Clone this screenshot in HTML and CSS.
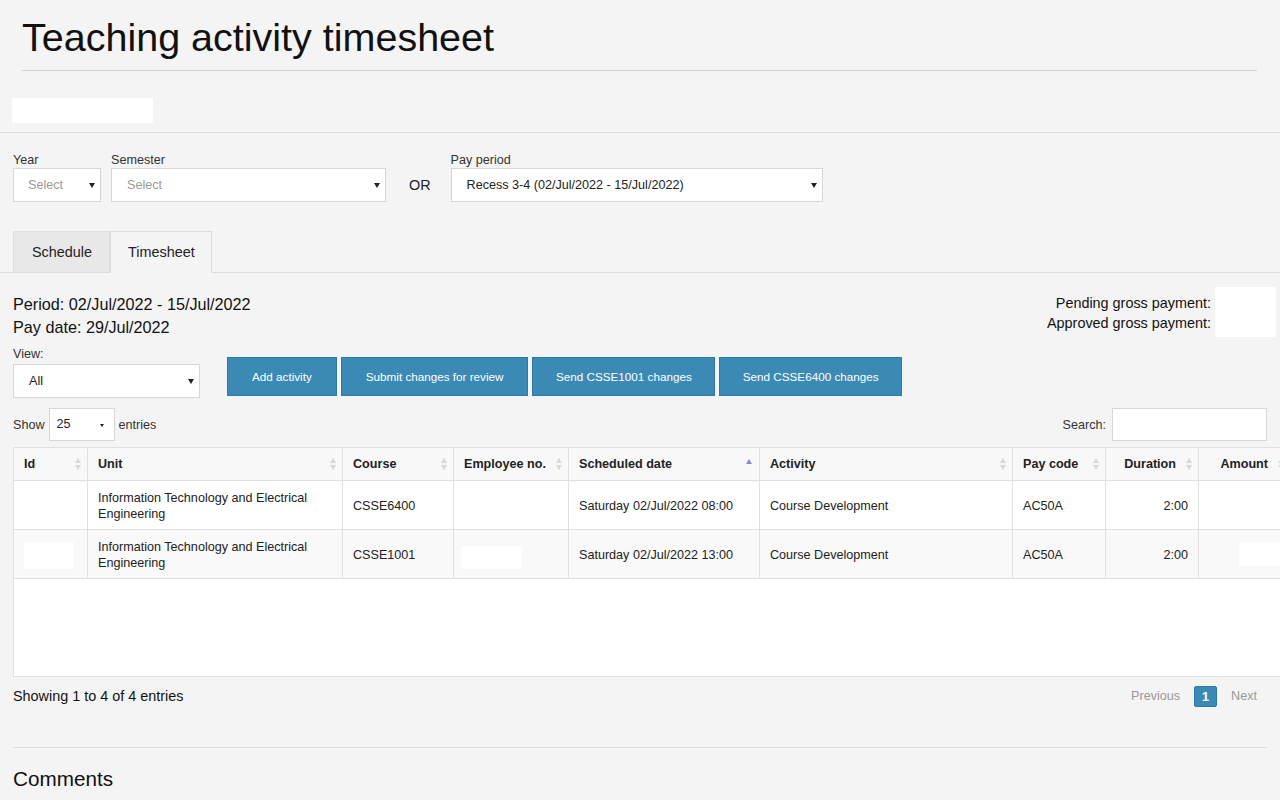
FILE: index.html
```html
<!DOCTYPE html>
<html lang="en">
<head>
<meta charset="utf-8">
<title>Teaching activity timesheet</title>
<link rel="stylesheet" href="styles.css">
</head>
<body>
<div class="title-wrap"><h1>Teaching activity timesheet</h1></div>
<div class="redact-bar"><span class="redact-name"></span></div>

<div class="filters">
  <div class="field">
    <label>Year</label>
    <div class="select w-year placeholder">Select<span class="caret"></span></div>
  </div>
  <div class="field">
    <label>Semester</label>
    <div class="select w-sem placeholder">Select<span class="caret"></span></div>
  </div>
  <div class="or">OR</div>
  <div class="field">
    <label>Pay period</label>
    <div class="select w-pay">Recess 3-4 (02/Jul/2022 - 15/Jul/2022)<span class="caret"></span></div>
  </div>
</div>

<div class="tabs">
  <div class="tab">Schedule</div>
  <div class="tab active">Timesheet</div>
</div>

<main class="content">
  <div class="info-row">
    <div class="period">
      <div>Period: 02/Jul/2022 - 15/Jul/2022</div>
      <div>Pay date: 29/Jul/2022</div>
    </div>
    <div class="payments">
      <div class="pay-labels">
        <div>Pending gross payment:</div>
        <div>Approved gross payment:</div>
      </div>
      <div class="pay-values"></div>
    </div>
  </div>

  <div class="controls">
    <div class="view-field">
      <label>View:</label>
      <div class="select w-view">All<span class="caret"></span></div>
    </div>
    <div class="buttons">
      <button class="btn">Add activity</button>
      <button class="btn">Submit changes for review</button>
      <button class="btn narrow">Send CSSE1001 changes</button>
      <button class="btn narrow">Send CSSE6400 changes</button>
    </div>
  </div>

  <div class="table-tools">
    <div class="length">Show <div class="select w-len">25<span class="caret small"></span></div> entries</div>
    <div class="search">Search: <div class="input"></div></div>
  </div>

  <table class="grid">
    <colgroup>
      <col class="c-id"><col class="c-unit"><col class="c-course"><col class="c-emp"><col class="c-date"><col class="c-act"><col class="c-pay"><col class="c-dur"><col class="c-amt">
    </colgroup>
    <thead>
      <tr>
        <th>Id<span class="sort"></span></th>
        <th>Unit<span class="sort"></span></th>
        <th>Course<span class="sort"></span></th>
        <th>Employee no.<span class="sort"></span></th>
        <th>Scheduled date<span class="sort asc"></span></th>
        <th>Activity<span class="sort"></span></th>
        <th>Pay code<span class="sort"></span></th>
        <th class="num">Duration<span class="sort"></span></th>
        <th class="num">Amount<span class="sort"></span></th>
      </tr>
    </thead>
    <tbody>
      <tr>
        <td></td>
        <td>Information Technology and Electrical Engineering</td>
        <td>CSSE6400</td>
        <td></td>
        <td>Saturday 02/Jul/2022 08:00</td>
        <td>Course Development</td>
        <td>AC50A</td>
        <td class="num">2:00</td>
        <td class="num"></td>
      </tr>
      <tr class="odd">
        <td><span class="redact r-id"></span></td>
        <td>Information Technology and Electrical Engineering</td>
        <td>CSSE1001</td>
        <td><span class="redact r-emp"></span></td>
        <td>Saturday 02/Jul/2022 13:00</td>
        <td>Course Development</td>
        <td>AC50A</td>
        <td class="num">2:00</td>
        <td class="amt-cell"><span class="redact r-amt"></span></td>
      </tr>
      <tr class="blank">
        <td colspan="9"></td>
      </tr>
    </tbody>
  </table>

  <div class="table-foot">
    <div class="info">Showing 1 to 4 of 4 entries</div>
    <div class="paging">
      <span class="pg disabled">Previous</span>
      <span class="pg current">1</span>
      <span class="pg disabled next">Next</span>
    </div>
  </div>

  <section class="comments">
    <h2>Comments</h2>
  </section>
</main>
</body>
</html>
```

FILE: styles.css
```css
* { box-sizing: border-box; }

html, body {
  margin: 0;
  padding: 0;
}

body {
  background: #f4f4f4;
  color: #222;
  font-family: "Liberation Sans", Arial, Helvetica, sans-serif;
  overflow-x: hidden;
}

.title-wrap {
  margin: 0 23px 0 22px;
  padding: 16px 0 11px;
  border-bottom: 1px solid #d2d2d2;
}

.title-wrap h1 {
  margin: 0;
  font-size: 39.5px;
  line-height: 43px;
  font-weight: 400;
  color: #111;
}

.redact-bar {
  padding: 27px 12px 9px;
  border-bottom: 1px solid #dedede;
}

.redact-name {
  display: block;
  width: 141px;
  height: 25px;
  background: #fff;
}

/* filters */
.filters {
  display: flex;
  align-items: flex-end;
  gap: 10px;
  padding: 20px 13px 0;
}

.field {
  display: flex;
  flex-direction: column;
  gap: 0;
}

label {
  font-size: 12.6px;
  line-height: 15px;
  color: #333;
}

.select {
  position: relative;
  height: 34px;
  line-height: 32px;
  background: #fff;
  border: 1px solid #d6d6d6;
  font-size: 12.6px;
  color: #222;
  padding-left: 14px;
  white-space: nowrap;
}

.select.placeholder { color: #999; }

.caret {
  position: absolute;
  right: 5px;
  top: 50%;
  margin-top: -2px;
  width: 0;
  height: 0;
  border-left: 3.5px solid transparent;
  border-right: 3.5px solid transparent;
  border-top: 5px solid #222;
}

.caret.small {
  right: 10px;
  border-left-width: 2.5px;
  border-right-width: 2.5px;
  border-top-width: 3px;
  margin-top: -1px;
}

.w-year { width: 88px; }
.w-sem { width: 275px; }
.w-pay { width: 372px; }
.w-view { width: 187px; padding-left: 15px; }
.w-len { width: 66px; height: 33px; line-height: 31px; padding-left: 7px; }

.w-sem, .w-pay { padding-left: 15px; }

.or {
  height: 34px;
  line-height: 34px;
  font-size: 14.4px;
  padding: 0 10px 0 13px;
  color: #222;
}

/* tabs */
.tabs {
  display: flex;
  margin-top: 29px;
  padding-left: 13px;
  border-bottom: 1px solid #dcdcdc;
}

.tab {
  height: 41px;
  line-height: 40px;
  padding: 0 18px;
  font-size: 14.4px;
  color: #222;
  background: #e8e8e8;
  border: 1px solid #e0e0e0;
  border-bottom: none;
}

.tab:first-child { padding-right: 17px; }

.tab.active {
  background: #f4f4f4;
  border: 1px solid #dcdcdc;
  border-bottom: 1px solid #f4f4f4;
  margin-bottom: -1px;
  height: 42px;
  padding: 0 16px 0 17px;
}

/* content */
.content {
  padding: 15px 13px 0;
}

.info-row {
  display: flex;
  justify-content: space-between;
  align-items: flex-start;
  margin-right: -9px;
  margin-top: -1px;
}

.period {
  padding-top: 6px;
  font-size: 16.2px;
  line-height: 23px;
  color: #111;
}

.payments {
  display: flex;
  align-items: flex-start;
  gap: 4px;
}

.pay-labels {
  padding-top: 6px;
  text-align: right;
  font-size: 14.4px;
  line-height: 20px;
  color: #111;
}

.pay-values {
  width: 61px;
  height: 50px;
  background: #fff;
}

.controls {
  display: flex;
  align-items: flex-start;
  gap: 27px;
  margin-top: 8px;
}

.view-field {
  display: flex;
  flex-direction: column;
  gap: 2px;
}

.buttons {
  display: flex;
  gap: 4px;
  margin-top: 10px;
}

.btn {
  height: 39px;
  padding: 0 24px;
  border: 1px solid #2b79a6;
  background: #3b8ab6;
  color: #fff;
  font-family: "Liberation Sans", Arial, sans-serif;
  font-size: 11.7px;
  cursor: pointer;
}

.btn.narrow { padding: 0 22.5px; }

.table-tools {
  display: flex;
  justify-content: space-between;
  align-items: center;
  margin-top: 10px;
  font-size: 12.6px;
  color: #333;
}

.length, .search {
  display: flex;
  align-items: center;
  gap: 4px;
}

.length .select { color: #222; }

.search { gap: 6px; }

.input {
  width: 155px;
  height: 33px;
  background: #fff;
  border: 1px solid #d6d6d6;
}

/* table */
.grid {
  margin-top: 6px;
  border-collapse: collapse;
  table-layout: fixed;
  width: 1277px;
  font-size: 12.6px;
  color: #222;
  background: #fff;
}

.c-id { width: 74px; }
.c-unit { width: 255px; }
.c-course { width: 111px; }
.c-emp { width: 115px; }
.c-date { width: 191px; }
.c-act { width: 253px; }
.c-pay { width: 93px; }
.c-dur { width: 93px; }
.c-amt { width: 92px; }

.grid th,
.grid td {
  border: 1px solid #e0e0e0;
  line-height: 16px;
  vertical-align: middle;
  text-align: left;
}

.grid th {
  position: relative;
  padding: 8px 20px 8px 10px;
  background: #f8f8f8;
  font-weight: 700;
  white-space: nowrap;
}

.grid td {
  padding: 9px 10px 7px;
}

.grid th.num { text-align: right; padding-right: 22px; }
.grid td.num { text-align: right; }

.grid tr.odd td { background: #f9f9f9; }

.sort {
  position: absolute;
  right: 5px;
  top: 50%;
  margin-top: -6px;
  width: 7px;
  height: 12px;
}

.sort::before,
.sort::after {
  content: "";
  position: absolute;
  left: 0;
  width: 0;
  height: 0;
  border-left: 3.5px solid transparent;
  border-right: 3.5px solid transparent;
}

.sort::before {
  top: 0;
  border-bottom: 5px solid #d8d8d8;
}

.sort::after {
  bottom: 0;
  border-top: 5px solid #d8d8d8;
}

.sort.asc { right: 6px; }
.sort.asc::before { top: 1px; border-bottom-color: #7b8cdc; }
.sort.asc::after { display: none; }

.redact {
  display: inline-block;
  background: #fff;
  vertical-align: middle;
}

.r-id { width: 50px; height: 27px; }
.r-emp { width: 61px; height: 23px; margin-left: -3px; margin-top: 4px; }
.grid td.amt-cell { padding: 8px 0 8px 40px; }
.r-amt { width: 52px; height: 24px; }

.grid tr.blank td {
  height: 98px;
  padding: 0;
  background: #fff;
}

.table-foot {
  display: flex;
  justify-content: space-between;
  align-items: center;
  margin-top: 7px;
  height: 24px;
}

.info {
  font-size: 14.4px;
  color: #111;
}

.paging {
  display: flex;
  align-items: center;
  font-size: 12.6px;
  padding-right: 10px;
}

.pg.disabled { color: #999; }

.pg.current {
  margin: 0 14px;
  width: 23px;
  height: 21px;
  line-height: 21px;
  text-align: center;
  background: #3b8ab6;
  border: 1px solid #2b79a6;
  border-radius: 2px;
  color: #fff;
  font-weight: 700;
}

.comments {
  margin-top: 39px;
  border-top: 1px solid #dedede;
}

.comments h2 {
  margin: 18px 0 0;
  font-size: 20.7px;
  line-height: 25px;
  font-weight: 400;
  color: #111;
}
```
